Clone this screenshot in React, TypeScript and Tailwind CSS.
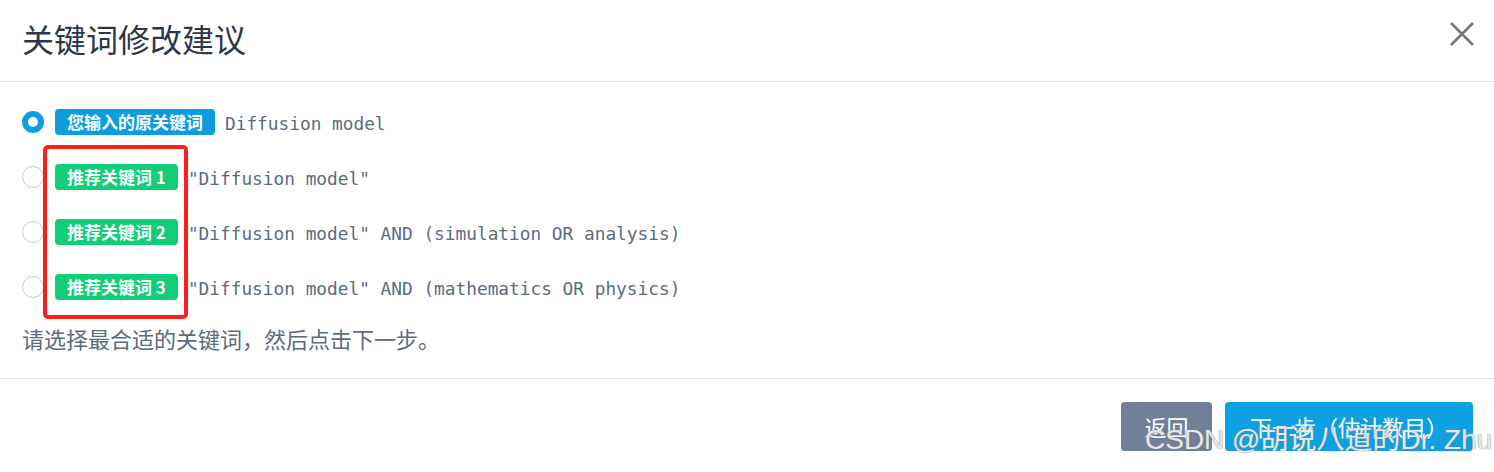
import { useState } from 'react';

const options = [
	{ label: '您输入的原关键词', kind: 'original', text: 'Diffusion model' },
	{ label: '推荐关键词 1', kind: 'suggest', text: '"Diffusion model"' },
	{ label: '推荐关键词 2', kind: 'suggest', text: '"Diffusion model" AND (simulation OR analysis)' },
	{ label: '推荐关键词 3', kind: 'suggest', text: '"Diffusion model" AND (mathematics OR physics)' },
];

const cjk = "font-['Noto_Sans_CJK_SC','Noto_Sans',sans-serif]";

const App = () => {
	const [selected, setSelected] = useState(0);

	return (
		<div className={`relative w-full h-[472px] bg-white overflow-hidden ${cjk}`}>
			{/* Header */}
			<div className="flex items-center justify-between h-[82px] px-[22px] border-b border-[#dee2e6]">
				<h1 className="text-[32px] leading-none text-[#2d3748] pb-[6px]">关键词修改建议</h1>
				<button className="w-[24px] h-[24px] mr-[-2px] mb-[14px] flex items-center justify-center text-[#777]">
					<svg width="24" height="24" viewBox="0 0 24 24" fill="none" stroke="currentColor" strokeWidth="2.6">
						<path d="M1 1 L23 23 M23 1 L1 23" />
					</svg>
				</button>
			</div>

			{/* Body */}
			<div className="relative px-[22px] pt-[12px] pb-[22px] border-b border-[#dee2e6]">
				{options.map((opt, i) => (
					<div key={i} className="flex items-center h-[55px]">
						<button
							onClick={() => setSelected(i)}
							className={
								selected === i
									? 'w-[22px] h-[22px] rounded-full border-[6px] border-[#0b9ee0] bg-white shrink-0'
									: 'w-[22px] h-[22px] rounded-full border border-[#c3cad6] bg-white shrink-0'
							}
						/>
						<span
							className={
								(opt.kind === 'original' ? 'bg-[#0d9ddf]' : 'bg-[#10cf78]') +
								' ml-[11px] h-[26px] px-[12px] flex items-center rounded-[4px] text-white text-[17px] font-bold leading-none'
							}
						>
							{opt.label}
						</span>
						<span className="ml-[10px] pt-[5px] font-['DejaVu_Sans_Mono',monospace] text-[17.8px] text-[#5b6b80] whitespace-pre">
							{opt.text}
						</span>
					</div>
				))}
				<p className="mt-[9px] mb-[3px] text-[22px] leading-[30px] text-[#5b6b80]">
					请选择最合适的关键词，然后点击下一步。
				</p>

				{/* annotation box */}
				<div className="absolute left-[43px] top-[63px] w-[145px] h-[174px] border-4 border-[#ff1e1e] rounded-[5px] pointer-events-none" />
			</div>

			{/* Footer */}
			<div className="flex justify-end gap-[13px] px-[21px] pt-[23px]">
				<button className="w-[91px] h-[49px] rounded-[4px] bg-[#718096] text-white text-[22px]">返回</button>
				<button className="w-[248px] h-[49px] rounded-[4px] bg-[#0ba1e2] text-white text-[22px]">下一步（估计数目）</button>
			</div>

			{/* watermark */}
			<div className="absolute left-[1145px] top-[421px] text-[28px] leading-[38px] text-white/80 [text-shadow:0_0_1px_#888,0_0_1px_#888] whitespace-nowrap pointer-events-none font-['Liberation_Sans','Noto_Sans_CJK_SC',sans-serif]">
				CSDN @胡说八道的Dr. Zhu
			</div>
		</div>
	);
};

export default App;
